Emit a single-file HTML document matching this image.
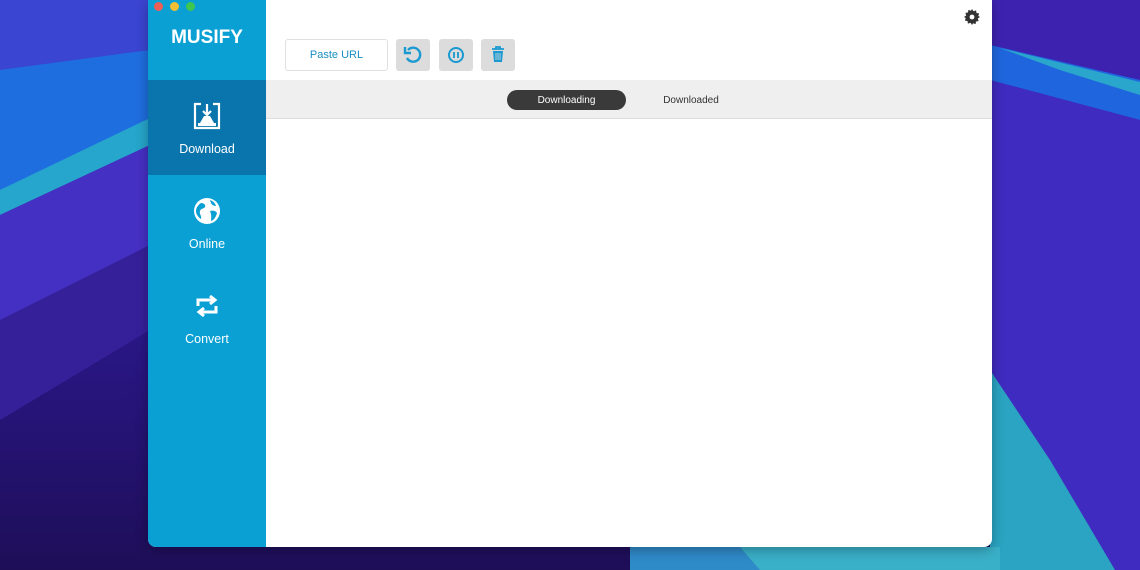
<!DOCTYPE html>
<html><head><meta charset="utf-8"><style>
*{margin:0;padding:0;box-sizing:border-box}
html,body{width:1140px;height:570px;overflow:hidden}
body{position:relative;font-family:"Liberation Sans",sans-serif;background:#2a1880}
.bg{position:absolute;left:0;top:0}
.win{position:absolute;left:148px;top:0;width:844px;height:547px;background:#fff;border-radius:0 0 8px 8px;overflow:hidden;box-shadow:0 3px 12px rgba(0,0,0,.3)}
.side{position:absolute;left:0;top:0;width:118px;height:547px;background:#0aa0d4}
.dot{position:absolute;top:2px;width:9px;height:9px;border-radius:50%}
.logo{position:absolute;top:27px;width:118px;text-align:center;color:#fff;font-weight:bold;font-size:19px}
.item{position:absolute;left:0;width:118px;height:95px;text-align:center;color:#fff;font-size:12.5px}
.item svg{display:block;margin:0 auto}
.act{background:#0a75ad}
.tabs{position:absolute;left:118px;top:80px;width:726px;height:39px;background:#efefef;border-bottom:1px solid #dcdcdc}
.btn{position:absolute;top:39px;height:32px;border-radius:3px;background:#dcdcdc}
.tab{position:absolute;top:10px;height:20px;font-size:10px;display:flex;align-items:center;justify-content:center}
</style></head><body>
<svg class="bg" width="1140" height="570" viewBox="0 0 1140 570">
<defs><linearGradient id="g1" x1="0" y1="0" x2="0" y2="1"><stop offset="0" stop-color="#4030c8"/><stop offset=".5" stop-color="#2c1990"/><stop offset="1" stop-color="#1e0e58"/></linearGradient></defs>
<rect width="1140" height="570" fill="url(#g1)"/>
<polygon points="0,0 150,0 150,55 0,75" fill="#3a45d2"/>
<polygon points="0,70 150,50 150,140 0,215" fill="#1f6ee0"/>
<polygon points="0,190 150,118 150,145 0,215" fill="#26a6cc"/>
<polygon points="0,215 150,145 150,245 0,320" fill="#4530c4"/>
<polygon points="0,320 150,245 150,330 0,420" fill="#36209a"/>
<polygon points="990,0 1140,0 1140,80 990,45" fill="#3d22b0"/>
<polygon points="990,45 1140,80 1140,120 990,80" fill="#1f66de"/>
<polygon points="1000,48 1140,82 1140,95 1060,70" fill="#2aa6cc"/>
<polygon points="990,80 1140,120 1140,570 990,570" fill="#3f2bbf"/>
<polygon points="990,370 1050,460 1115,570 990,570" fill="#2aa4c2"/>
<polygon points="630,547 1000,547 1000,570 630,570" fill="#2f8ac8"/>
<polygon points="740,547 1000,547 1000,570 760,570" fill="#3ab0c8"/>
</svg>
<div class="win">
 <div class="side">
  <div class="dot" style="left:6px;background:#ec5f56"></div>
  <div class="dot" style="left:22px;background:#f4bf33"></div>
  <div class="dot" style="left:38px;background:#3fc650"></div>
  <div class="logo">MUSIFY</div>
  <div class="item act" style="top:80px"><svg width="30" height="30" viewBox="0 0 30 30" style="margin-top:21px"><path d="M9 3H3v24h24V3h-6" fill="none" stroke="#fff" stroke-width="2.2"/><path d="M15 3v10M11 10l4 4 4-4" fill="none" stroke="#fff" stroke-width="2.2"/><path d="M12 15h6l4 7H8z" fill="#fff"/><rect x="6" y="22" width="18" height="3" fill="#fff"/></svg><div style="margin-top:11px">Download</div></div>
  <div class="item" style="top:175px"><svg width="30" height="30" viewBox="0 0 30 30" style="margin-top:21px"><circle cx="15" cy="15" r="13" fill="#fff"/><path d="M9 7c3 0 5 2 4 4s-4 1-5 4 2 5 1 8c-3-2-5-5-5-8 0-3 2-6 5-8zM18 4c3 1 5 3 6 6-2 0-4-1-5-3zM18 15c3-1 6 0 7 2-1 4-3 7-6 8 0-3 1-5-1-10z" fill="#0aa0d4"/></svg><div style="margin-top:11px">Online</div></div>
  <div class="item" style="top:270px"><svg width="30" height="30" viewBox="0 0 30 30" style="margin-top:21px"><path d="M6 15V9h16M18 5l5 4-5 4M24 15v6H8M12 17l-5 4 5 4" fill="none" stroke="#fff" stroke-width="3"/></svg><div style="margin-top:11px">Convert</div></div>
 </div>
 <div class="btn" style="left:137px;width:103px;height:32px;background:#fff;border:1px solid #e0e0e0;color:#1a8fc4;font-size:11px;display:flex;align-items:center;justify-content:center">Paste URL</div>
 <div class="btn" style="left:248px;width:34px"><svg width="34" height="32" viewBox="0 0 34 32"><path d="M12 11a7 7 0 1 1-1 8" fill="none" stroke="#1a9ad0" stroke-width="2.4"/><path d="M9 8v6h6" fill="none" stroke="#1a9ad0" stroke-width="2.4"/></svg></div>
 <div class="btn" style="left:291px;width:34px"><svg width="34" height="32" viewBox="0 0 34 32"><circle cx="17" cy="16" r="7" fill="none" stroke="#1a9ad0" stroke-width="2"/><path d="M15 13v6M19 13v6" stroke="#1a9ad0" stroke-width="1.8"/></svg></div>
 <div class="btn" style="left:333px;width:34px"><svg width="34" height="32" viewBox="0 0 34 32"><path d="M11 10h12M15 10V8h4v2" fill="none" stroke="#1a9ad0" stroke-width="1.8"/><path d="M12 12h10l-1 11h-8z" fill="#1a9ad0"/><path d="M15 14v7M17 14v7M19 14v7" stroke="#dcdcdc" stroke-width=".8"/></svg></div>
 <svg style="position:absolute;left:816px;top:9px" width="16" height="16" viewBox="0 0 16 16"><path d="M8 0l1.5 2.2 2.6-.8.4 2.6 2.6.4-.8 2.6L16 8l-2.2 1.5.8 2.6-2.6.4-.4 2.6-2.6-.8L8 16l-1.5-2.2-2.6.8-.4-2.6-2.6-.4.8-2.6L0 8l2.2-1.5-.8-2.6 2.6-.4.4-2.6 2.6.8z" fill="#333"/><circle cx="8" cy="8" r="2.4" fill="#fff"/></svg>
 <div class="tabs">
  <div class="tab" style="left:241px;width:119px;border-radius:10px;background:#3a3a3a;color:#fff">Downloading</div>
  <div class="tab" style="left:390px;width:70px;color:#333">Downloaded</div>
 </div>
</div>
</body></html>
